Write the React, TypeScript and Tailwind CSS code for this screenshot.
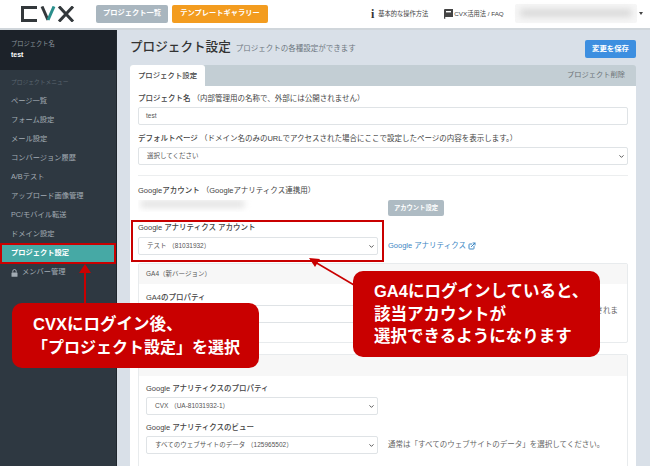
import { ChevronDown, ExternalLink } from 'lucide-react';

const jp = { fontFamily: '"Liberation Sans", "Noto Sans CJK JP", sans-serif' };

const menu = [
  'ページ一覧',
  'フォーム設定',
  'メール設定',
  'コンバージョン履歴',
  'A/Bテスト',
  'アップロード画像管理',
  'PC/モバイル転送',
  'ドメイン設定',
];

function Select({ value, className }: { value: string; className: string }) {
  return (
    <div className={`flex items-center justify-between rounded-[2px] border border-[#dfe3e6] bg-white pl-[8px] pr-[2px] ${className}`}>
      <span className="text-[6.5px] text-[#555]">{value}</span>
      <ChevronDown size={7} strokeWidth={3} className="text-[#444]" />
    </div>
  );
}

function Label({ children, className = '' }: { children: React.ReactNode; className?: string }) {
  return <div className={`text-[7.5px] leading-[12px] font-medium text-[#444] ${className}`}>{children}</div>;
}

export default function App() {
  return (
    <div style={jp} className="relative h-[466px] w-[650px] overflow-hidden bg-[#d9e0e8]">
      {/* header */}
      <header className="flex h-[30px] items-center border-b-2 border-[#d0d6db] bg-white pb-[1px]">
        <div className="ml-[21px] flex w-[75px] items-center">
          <svg width="54" height="16" viewBox="0 0 54 16" fill="none" strokeWidth="3">
            <path d="M16 1.5H1.5V14.5H16" stroke="#33383b" />
            <path d="M21 0.5L27 14" stroke="#33383b" />
            <path d="M27 14L33 0.5" stroke="#2a8f8c" />
            <path d="M38 0.5L52 15.5M52 0.5L38 15.5" stroke="#33383b" />
          </svg>
        </div>
        <button className="flex h-[18px] w-[72px] items-center justify-center rounded-[2px] bg-[#a9b6bf] text-[7.25px] font-bold text-white">
          プロジェクト一覧
        </button>
        <button className="ml-[4px] flex h-[18px] w-[96px] items-center justify-center rounded-[2px] bg-[#f39c1f] text-[7.25px] font-bold text-white">
          テンプレートギャラリー
        </button>
        <div className="ml-[103px] flex items-center">
          <span style={{ fontFamily: '"Liberation Serif", serif' }} className="mr-[4px] text-[12px] leading-none font-bold text-[#333]">i</span>
          <span className="text-[6.25px] whitespace-nowrap text-[#444]">基本的な操作方法</span>
        </div>
        <div className="ml-[16px] flex items-center">
          <svg width="9" height="10" viewBox="0 0 9 10" className="mr-[1px]">
            <path d="M0 1a1 1 0 0 1 1-1h8v8H2a1 1 0 0 0 0 2h7H1a1 1 0 0 1-1-1z" fill="#444" />
            <rect x="2" y="2" width="5" height="1.4" fill="#fff" />
          </svg>
          <span className="text-[6.25px] whitespace-nowrap text-[#444]">CVX活用法 / FAQ</span>
        </div>
        <div className="ml-[11px] h-[19px] w-[122px] rounded-[2px] bg-[#f6f6f6] p-[5px]">
          <div className="h-[8px] w-full rounded-full bg-[#d9d9d9] blur-[3px]" />
        </div>
        <div className="ml-[2px] h-0 w-0 border-x-[2px] border-t-[3px] border-x-transparent border-t-[#444]" />
      </header>

      <div className="flex h-[436px]">
        {/* sidebar */}
        <aside className="h-full w-[117px] shrink-0 border-r border-[#20272e] bg-[#2e3841]">
          <div className="h-[40px] bg-[#1c2229] pt-[9px] pl-[11px]">
            <div className="text-[6.25px] leading-[10px] text-[#8d969e]">プロジェクト名</div>
            <div className="text-[7px] leading-[11px] font-bold text-white">test</div>
          </div>
          <div className="pt-[7px] pl-[11px] text-[5.75px] leading-[10px] text-[#5b6670]">プロジェクトメニュー</div>
          <nav className="mt-[5px]">
            {menu.map((m) => (
              <div key={m} className="flex h-[19px] items-center pl-[11px] text-[7.25px] text-[#a3acb4]">{m}</div>
            ))}
            <div className="flex h-[19px] items-center bg-[#46a9a5] pl-[11px] text-[7.25px] font-bold text-white">プロジェクト設定</div>
            <div className="flex h-[19px] items-center pl-[11px] text-[7.25px] text-[#a3acb4]">
              <svg width="7" height="8" viewBox="0 0 7 8" className="mr-[4px]">
                <path d="M1.8 3.5V2.2a1.7 1.7 0 0 1 3.4 0v1.3" fill="none" stroke="#a3acb4" strokeWidth="1" />
                <rect x="0.5" y="3.4" width="6" height="4.4" rx="0.6" fill="#a3acb4" />
              </svg>
              メンバー管理
            </div>
          </nav>
        </aside>

        {/* main */}
        <main className="w-[519px] pl-[13px]">
          <div className="flex h-[35px] w-[506px] items-start justify-between pt-[10px]">
            <div className="flex items-baseline">
              <h1 className="text-[12.6px] leading-[15px] font-medium text-[#333]">プロジェクト設定</h1>
              <span className="ml-[5px] text-[7.5px] text-[#6d7780]">プロジェクトの各種設定ができます</span>
            </div>
            <button className="h-[18px] w-[51px] rounded-[2px] bg-[#3d8fe0] text-[7.4px] font-bold text-white">変更を保存</button>
          </div>

          <div className="flex h-[21px] w-[506px] justify-between rounded-t-[3px] bg-[#c3ced4]">
            <div className="flex w-[75px] items-center justify-center rounded-t-[3px] bg-white text-[7.4px] font-medium text-[#444]">プロジェクト設定</div>
            <div className="flex items-center pr-[11px] text-[7.25px] text-[#6b7276]">プロジェクト削除</div>
          </div>

          <section className="h-[380px] w-[506px] bg-white px-[8px] pt-[7px]">
            <Label>プロジェクト名 <span className="font-normal">（内部管理用の名称で、外部には公開されません）</span></Label>
            <div className="mt-[2px] flex h-[18px] w-[490px] items-center rounded-[2px] border border-[#dfe3e6] pl-[7px] text-[6.5px] text-[#555]">test</div>
            <Label className="mt-[8px]">デフォルトページ <span className="font-normal">（ドメイン名のみのURLでアクセスされた場合にここで設定したページの内容を表示します。）</span></Label>
            <Select value="選択してください" className="mt-[2px] h-[18px] w-[490px]" />
            <div className="mt-[10px] h-px w-[490px] bg-[#eceeef]" />

            <Label className="mt-[9px]">Googleアカウント <span className="font-normal">（Googleアナリティクス連携用）</span></Label>
            <div className="flex h-[19px] items-start">
              <div className="mt-[3px] h-[12px] w-[250px] overflow-hidden">
                <div className="ml-[2px] h-[8px] w-[105px] rounded-full bg-[#e4e4e4] blur-[3px]" />
              </div>
              <button className="mt-[3px] h-[16px] w-[56px] rounded-[2px] bg-[#aebbc3] text-[6.3px] font-bold text-white">アカウント設定</button>
            </div>

            <Label className="mt-[6px]">Google アナリティクス アカウント</Label>
            <div className="mt-[3px] flex items-center">
              <Select value="テスト （81031932）" className="h-[18px] w-[240px]" />
              <span className="ml-[10px] flex items-center text-[7.5px] text-[#3d87c4]">
                Google アナリティクス
                <ExternalLink size={8} strokeWidth={3} className="ml-[2px]" />
              </span>
            </div>

            <div className="mt-[8px] h-[80px] w-[490px] rounded-[2px] border border-[#e8ebed]">
              <div className="flex h-[20px] items-center bg-[#f7f7f7] pl-[7px] text-[6.5px] text-[#555]">GA4（新バージョン）</div>
              <div className="px-[7px] pt-[8px]">
                <Label>GA4のプロパティ</Label>
                <div className="mt-[1px] flex items-start">
                  <Select value="" className="h-[18px] w-[232px]" />
                  <span className="ml-[10px] w-[230px] text-right text-[7.5px] leading-[12px] whitespace-nowrap text-[#666]">されま</span>
                </div>
              </div>
            </div>

            <div className="mt-[11px] h-[130px] w-[490px] rounded-[2px] border border-[#e8ebed]">
              <div className="h-[21px] bg-[#f7f7f7]" />
              <div className="px-[7px] pt-[7px]">
                <Label>Google アナリティクスのプロパティ</Label>
                <Select value="CVX （UA-81031932-1）" className="mt-[2px] h-[18px] w-[232px]" />
                <Label className="mt-[7px]">Google アナリティクスのビュー</Label>
                <div className="mt-[2px] flex items-center">
                  <Select value="すべてのウェブサイトのデータ （125965502）" className="h-[18px] w-[232px]" />
                  <span className="ml-[10px] text-[7.5px] whitespace-nowrap text-[#666]">通常は「すべてのウェブサイトのデータ」を選択してください。</span>
                </div>
              </div>
            </div>
          </section>
        </main>
      </div>

      {/* annotations */}
      <div className="absolute top-[243px] left-0 h-[21px] w-[116px] border-2 border-[#c90000]" />
      <div className="absolute top-[220px] left-[131px] h-[42px] w-[253px] border-2 border-[#c90000]" />
      <svg width="650" height="466" className="pointer-events-none absolute top-0 left-0">
        <path d="M85 304V272" stroke="#c90000" strokeWidth="2" />
        <path d="M85 264L79 273H91Z" fill="#c90000" />
        <path d="M354 285L315 262" stroke="#c90000" strokeWidth="1.6" />
        <path d="M309 258L320 259L315 267Z" fill="#c90000" />
      </svg>
      <div className="absolute top-[303px] left-[12px] flex h-[65px] w-[247px] flex-col justify-center rounded-[10px] bg-[#c90000] pl-[21px] text-[16.5px] leading-[23px] font-bold text-white">
        <div>CVXにログイン後、</div>
        <div className="-ml-[1px] text-[16px]">「プロジェクト設定」を選択</div>
      </div>
      <div className="absolute top-[271px] left-[353px] flex h-[86px] w-[247px] flex-col justify-center rounded-[10px] bg-[#c90000] pl-[21px] text-[16.5px] leading-[22.5px] font-bold text-white">
        <div>GA4にログインしていると、</div>
        <div>該当アカウントが</div>
        <div>選択できるようになります</div>
      </div>
    </div>
  );
}
